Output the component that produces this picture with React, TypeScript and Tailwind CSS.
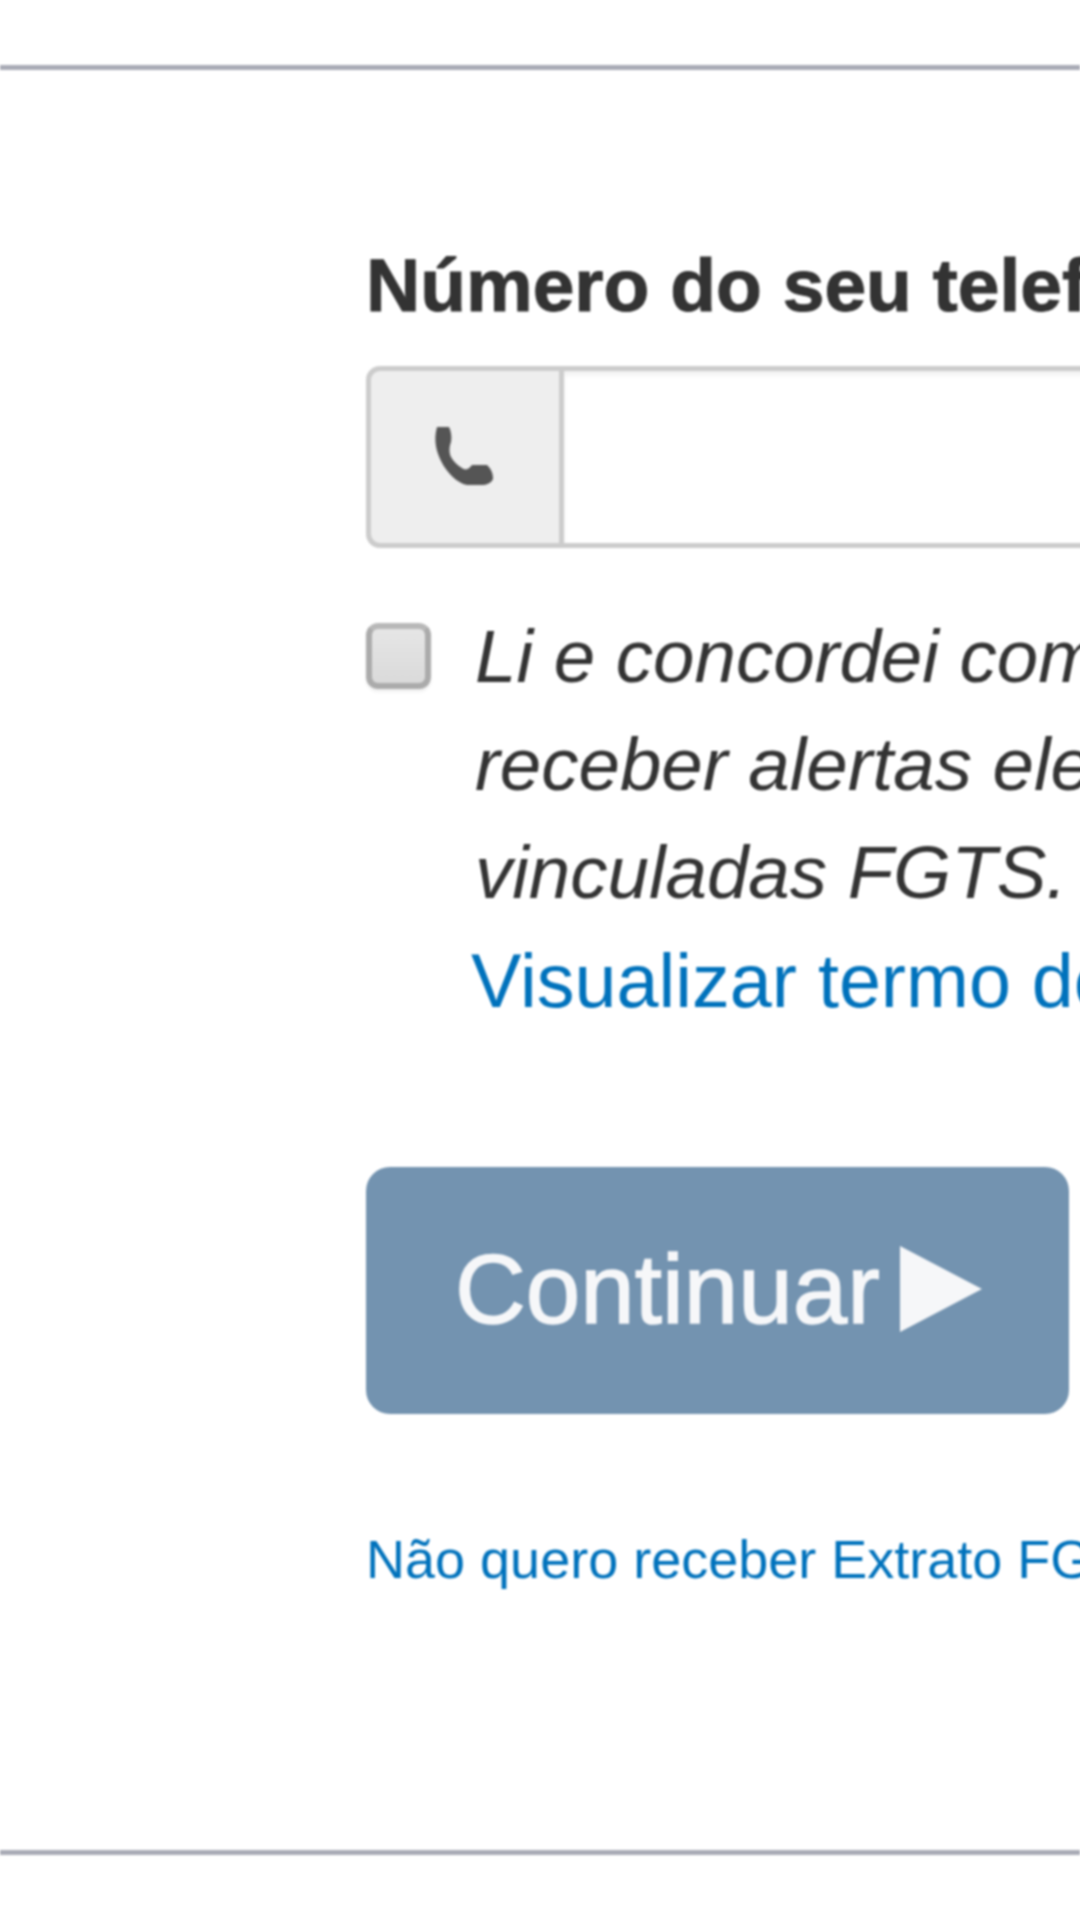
import React from 'react';

const sans = 'font-["Liberation_Sans",Arial,sans-serif]';

const PhoneIcon = () => (
  <svg viewBox="0 0 65 59" className="w-[65px] h-[59px] mr-[7px] mb-[2px] text-[#555555]" fill="currentColor">
    <path d="M8 0 L20 0 C22 4 23 10 22 15 C20 20 20 26 22 30 C25 35 28 38 33 41 C37 44 40 42 43 38 L58 38 C62 42 64 46 64 52 C62 56 58 58 52 58 L38 58 C28 56 18 46 12 34 C8 26 4 14 8 0 Z" />
  </svg>
);

const PlayIcon = () => (
  <svg viewBox="0 0 82 86" className="w-[82px] h-[86px] ml-[20px] text-[#f6f7f9]" fill="currentColor">
    <polygon points="0,0 82,43 0,86" />
  </svg>
);

export default function App() {
  return (
    <div className={`w-[1080px] h-[1920px] overflow-hidden bg-white ${sans}`}>
      <div className="blur-[0.8px]">
        <div className="mt-[65px] h-[5px] bg-[#a9abb6]" />

        <div className="pl-[366px] pt-[175px]">
          <label className="block whitespace-nowrap text-[75px] leading-[80px] font-bold text-[#333333] [-webkit-text-stroke:1px_#333333]">
            Número do seu telefone
          </label>

          {/* campo do telefone */}
          <div className="mt-[41px] flex w-[900px] h-[182px]">
            <div className="w-[198px] shrink-0 flex items-center justify-center bg-[#eeeeee] border-[5px] border-[#cccccc] rounded-l-[14px]">
              <PhoneIcon />
            </div>
            <input
              type="text"
              className="flex-1 bg-white border-y-[5px] border-r-[5px] border-l-0 border-[#cccccc] shadow-[inset_0_4px_5px_rgba(0,0,0,0.06)] outline-none"
            />
          </div>

          <div className="mt-[55px] flex items-start gap-[40px]">
            <div className="mt-[20px] w-[65px] h-[66px] shrink-0 rounded-[12px] border-[6px] border-[#ababab] border-t-[#b8b8b8] bg-gradient-to-b from-[#e6e6e6] to-[#dadada] shadow-[0_3px_3px_rgba(0,0,0,0.06)]" />
            <div className="text-[74.5px] leading-[108px] whitespace-nowrap">
              <p className="pl-[4px] italic text-[#333333]">Li e concordei com os termos</p>
              <p className="pl-[4px] italic text-[#333333]">receber alertas eletrônicos</p>
              <p className="pl-[4px] italic text-[#333333]">vinculadas FGTS.</p>
              <a className="block text-[75.5px] text-[#0072bc]">Visualizar termo de adesão</a>
            </div>
          </div>

          <button className="mt-[132px] w-[703px] h-[247px] rounded-[24px] bg-[#7393b0] flex items-center pl-[89px] pb-[4px] text-[98px] leading-none text-[#f6f7f9] [-webkit-text-stroke:1.5px_#f6f7f9]">
            Continuar
            <PlayIcon />
          </button>

          <a className="block mt-[115px] text-[54px] leading-[60px] whitespace-nowrap text-[#0072bc]">
            Não quero receber Extrato FGTS por SMS
          </a>
        </div>

        <div className="mt-[261px] h-[5px] bg-[#a9abb6]" />
      </div>
    </div>
  );
}
